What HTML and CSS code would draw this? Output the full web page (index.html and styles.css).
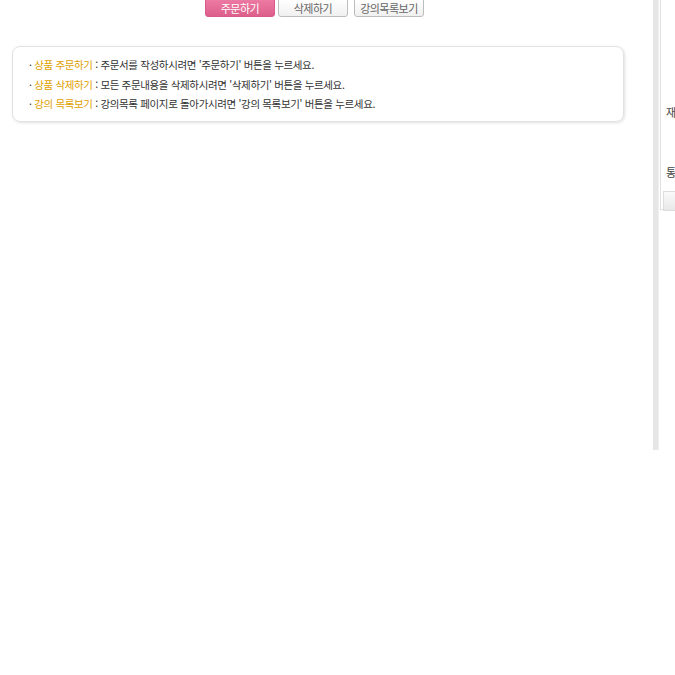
FILE: index.html
```html
<!DOCTYPE html>
<html lang="ko">
<head>
    <meta charset="UTF-8">
    <title>주문하기</title>
    <link rel="stylesheet" href="styles.css">
</head>
<body>
    <div class="wrap">
        <div class="main">
            <div class="btnRow">
                <span class="btn btnOrder">주문하기</span>
                <span class="btn btnDelete">삭제하기</span>
                <span class="btn btnList">강의목록보기</span>
            </div>

            <div class="guideBox">
                <p>· <em>상품 주문하기</em> : 주문서를 작성하시려면 '주문하기' 버튼을 누르세요.</p>
                <p>· <em>상품 삭제하기</em> : 모든 주문내용을 삭제하시려면 '삭제하기' 버튼을 누르세요.</p>
                <p>· <em>강의 목록보기</em> : 강의목록 페이지로 돌아가시려면 '강의 목록보기' 버튼을 누르세요.</p>
            </div>
        </div>

        <div class="divider"></div>

        <div class="side">
            <div class="sideLabel first">재</div>
            <div class="sideLabel">통</div>
            <div class="sideBox"></div>
        </div>
    </div>
</body>
</html>
```

FILE: styles.css
```css
body{
    margin: 0;
    background-color: #fff;
    font-family: "Noto Sans CJK KR", "Noto Sans", sans-serif;
    font-size: 11px;
    color: #333;
    overflow: hidden;
}
.wrap{
    display: flex;
    align-items: flex-start;
}
.main{
    width: 653px;
    flex-shrink: 0;
}
.btnRow{
    display: flex;
    padding-left: 205px;
}
.btn{
    display: inline-block;
    box-sizing: border-box;
    width: 70px;
    height: 18px;
    margin-top: -1px;
    line-height: 17px;
    text-align: center;
    font-size: 11px;
    letter-spacing: -0.5px;
    border-radius: 0 0 3px 3px;
    color: #666;
    background: linear-gradient(#fff, #f0f0f0);
    border: 1px solid #bdbdbd;
}
.btnOrder{
    color: #fff;
    background: linear-gradient(#ec7aa2, #dd5f8b);
    border-color: #d9598a;
}
.btnDelete{
    margin-left: 3px;
}
.btnList{
    margin-left: 6px;
}
.guideBox{
    box-sizing: border-box;
    width: 612px;
    height: 76px;
    margin: 29px 0 0 12px;
    padding: 8px 0 0 16px;
    border: 1px solid #e2e2e2;
    border-radius: 8px;
    box-shadow: 1px 1px 3px hsla(0, 0%, 0%, 0.12);
}
.guideBox p{
    margin: 0;
    height: 19.5px;
    line-height: 19px;
    font-size: 10.5px;
    letter-spacing: -0.35px;
    color: #333;
}
.guideBox em{
    font-style: normal;
    color: #e0a000;
}
.divider{
    flex-shrink: 0;
    width: 5px;
    height: 450px;
    background-color: #e6e6e6;
    border-right: 1px solid #efefef;
}
.side{
    flex-shrink: 0;
    width: 40px;
    height: 209px;
    margin-left: 1px;
    border-left: 1px solid #e0e0e0;
    border-bottom: 1px solid #ddd;
    padding-left: 5px;
}
.sideLabel{
    font-size: 11px;
    color: #444;
    height: 16px;
    line-height: 16px;
    margin-top: 44px;
}
.sideLabel.first{
    margin-top: 104px;
}
.sideBox{
    margin-top: 11px;
    margin-left: -3px;
    height: 18px;
    border: 1px solid #ddd;
    border-right: none;
    background: linear-gradient(#fafafa, #e8e8e8);
}
```
